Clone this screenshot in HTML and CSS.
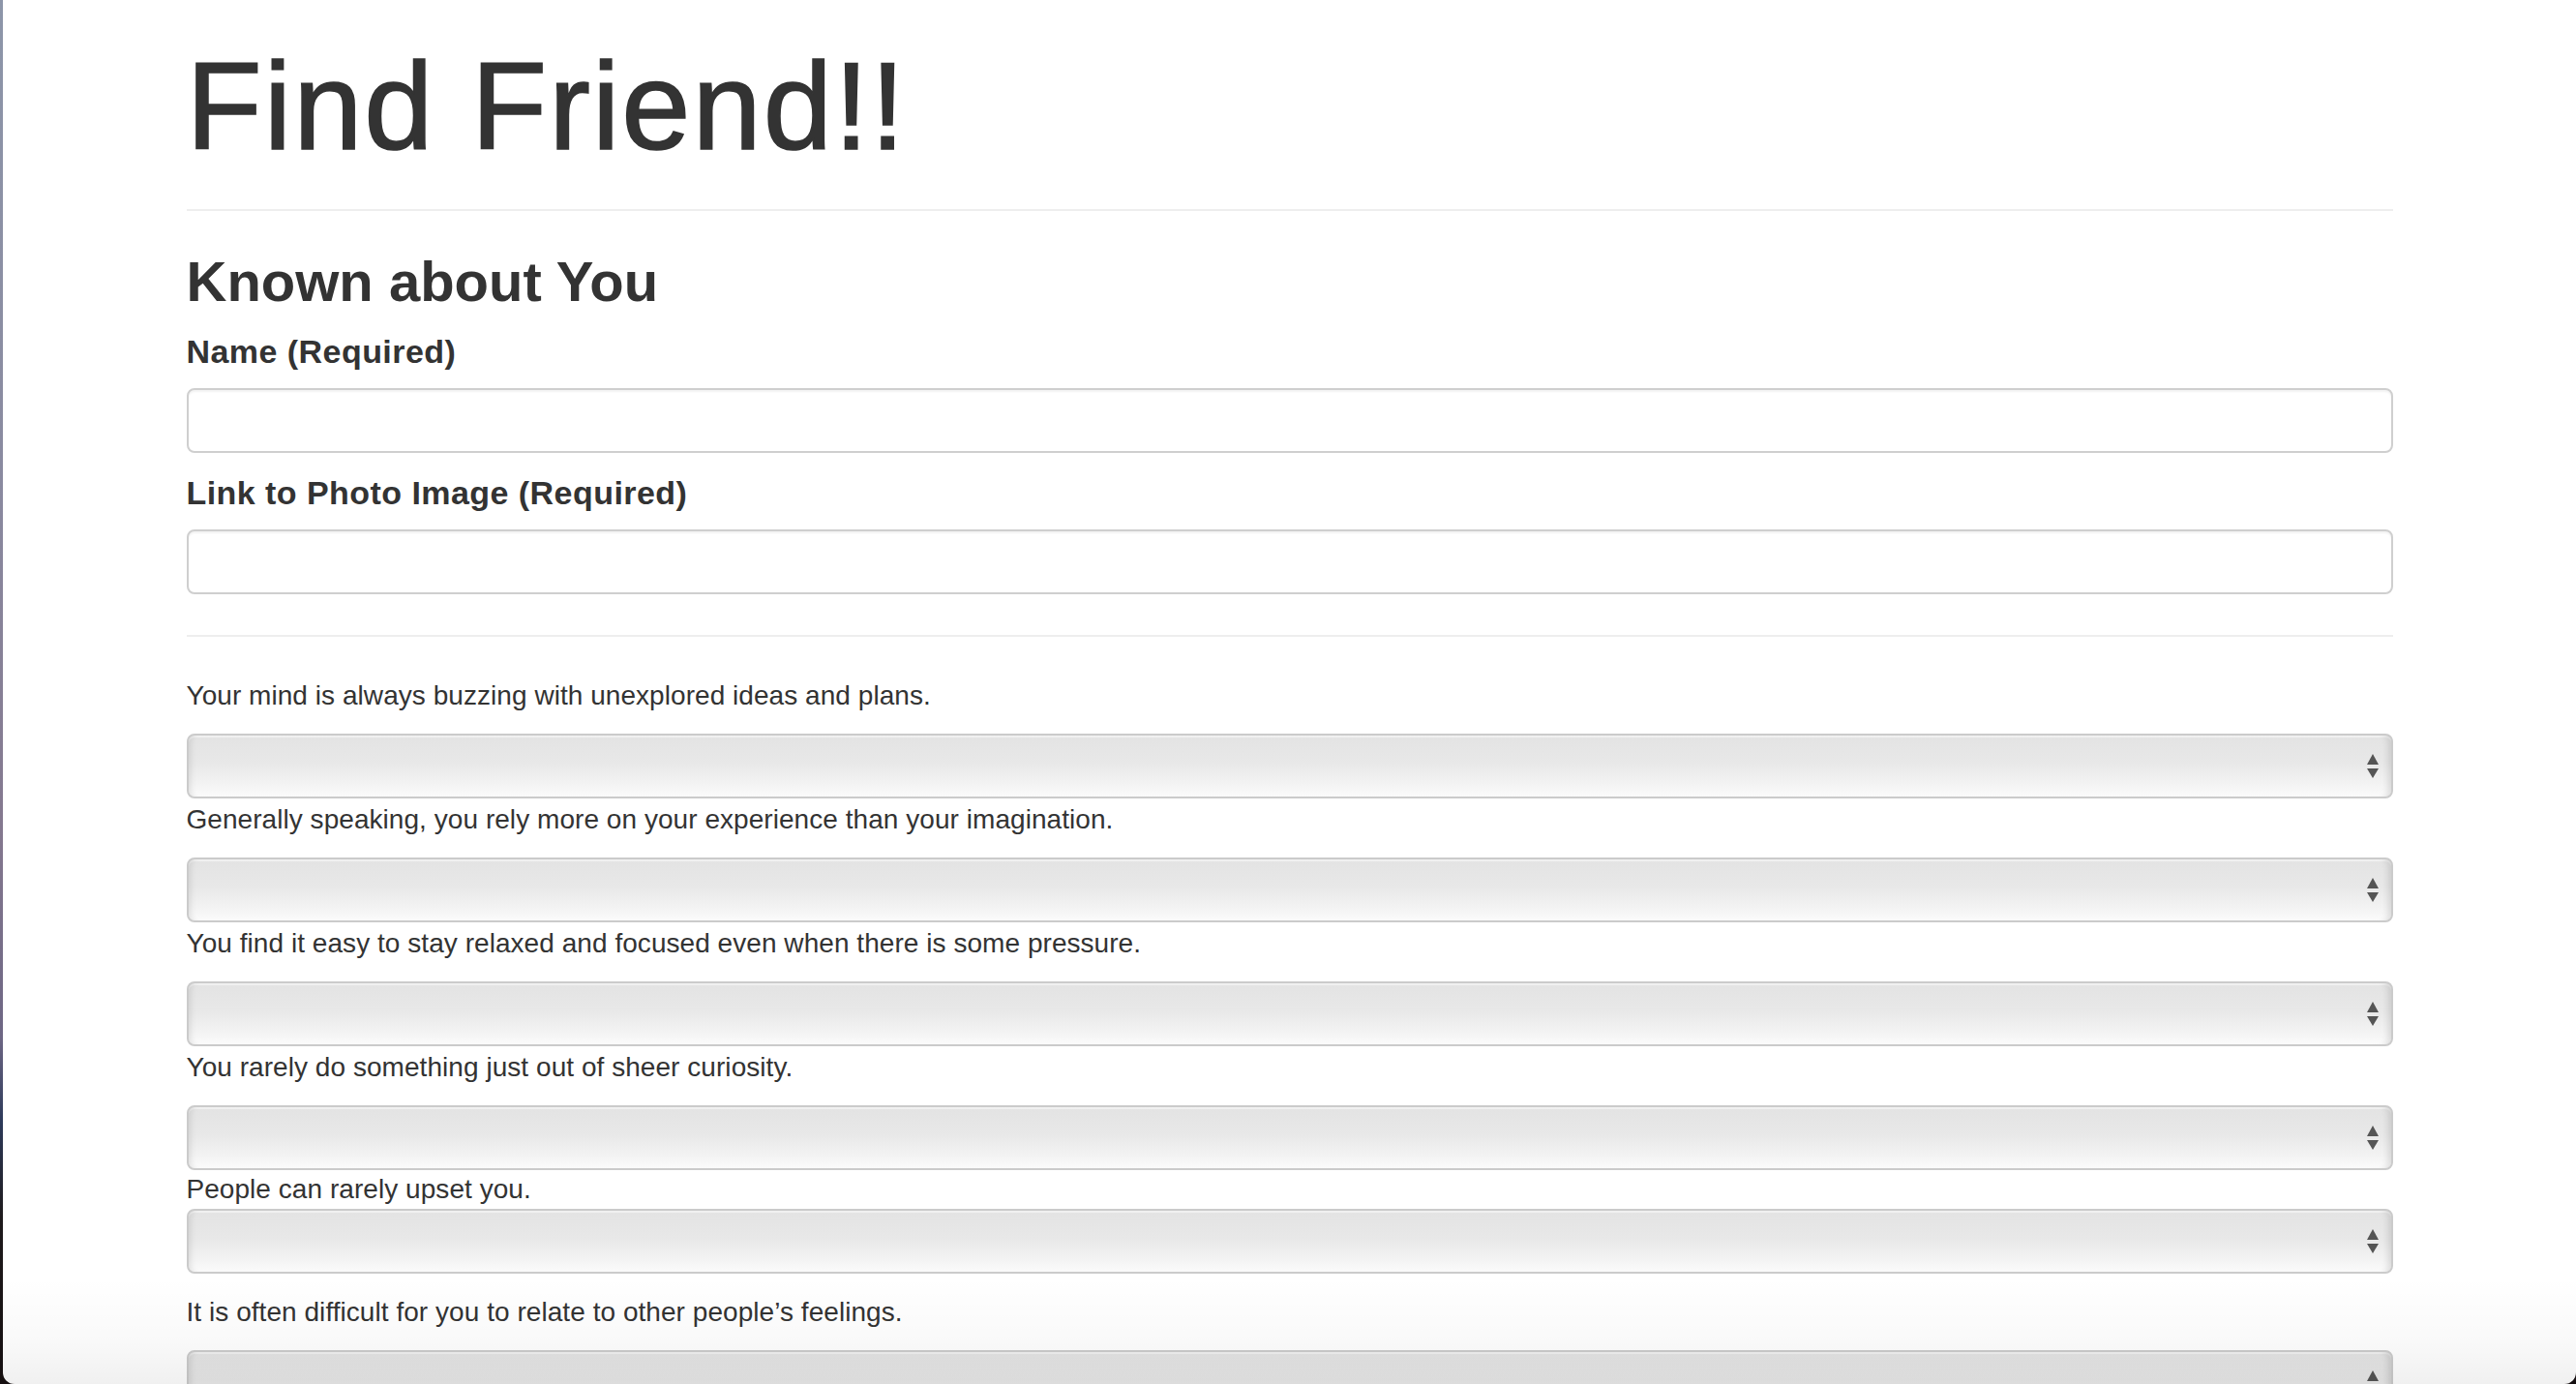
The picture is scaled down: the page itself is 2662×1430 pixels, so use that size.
FILE: index.html
```html
<!DOCTYPE html>
<html lang="en">
<head>
<meta charset="utf-8">
<title>Find Friend</title>
<link rel="stylesheet" href="styles.css">
</head>
<body>
<div class="window">
  <div class="container">
    <h1 class="title">Find Friend!!</h1>
    <hr class="rule rule-top">
    <h3 class="section-title">Known about You</h3>
    <div class="field field-first">
      <label class="field-label">Name (Required)</label>
      <input class="text-input" type="text">
    </div>
    <div class="field">
      <label class="field-label">Link to Photo Image (Required)</label>
      <input class="text-input" type="text">
    </div>
    <hr class="rule rule-mid">
    <div class="question question-first">
      <p class="q-text">Your mind is always buzzing with unexplored ideas and plans.</p>
      <div class="select-wrap"><select class="q-select"></select><span class="arrows"></span></div>
    </div>
    <div class="question">
      <p class="q-text">Generally speaking, you rely more on your experience than your imagination.</p>
      <div class="select-wrap"><select class="q-select"></select><span class="arrows"></span></div>
    </div>
    <div class="question">
      <p class="q-text">You find it easy to stay relaxed and focused even when there is some pressure.</p>
      <div class="select-wrap"><select class="q-select"></select><span class="arrows"></span></div>
    </div>
    <div class="question">
      <p class="q-text">You rarely do something just out of sheer curiosity.</p>
      <div class="select-wrap"><select class="q-select"></select><span class="arrows"></span></div>
    </div>
    <div class="question question-tight">
      <p class="q-text">People can rarely upset you.</p>
      <div class="select-wrap"><select class="q-select"></select><span class="arrows"></span></div>
    </div>
    <div class="question question-spaced">
      <p class="q-text">It is often difficult for you to relate to other people’s feelings.</p>
      <div class="select-wrap"><select class="q-select"></select><span class="arrows"></span></div>
    </div>
  </div>
  <div class="bottom-shade"></div>
</div>
</body>
</html>
```

FILE: styles.css
```css
html, body {
  margin: 0;
  padding: 0;
  height: 1430px;
  overflow: hidden;
}

body {
  background: linear-gradient(to bottom, #8d96a9 0%, #8a8aa0 35%, #84788f 60%, #6d6684 75%, #2d3a5a 81%, #1e1a1c 88%, #150f10 100%);
  font-family: "Liberation Sans", Helvetica, Arial, sans-serif;
  color: #333;
}

.window {
  position: relative;
  margin-left: 3px;
  height: 1430px;
  background: #fff;
  border-radius: 0 0 12px 12px;
  overflow: hidden;
}

.container {
  width: 2280px;
  margin: 0 auto;
}

.title {
  margin: 0;
  padding-top: 39px;
  font-size: 128px;
  line-height: 141px;
  font-weight: 500;
  letter-spacing: 2px;
  -webkit-text-stroke: 1.6px #333;
}

.rule {
  height: 0;
  border: 0;
  border-top: 2px solid #eee;
  margin: 0;
}

.rule-top {
  margin-top: 36px;
}

.section-title {
  margin: 41px 0 0;
  font-size: 58px;
  line-height: 64px;
  font-weight: bold;
}

.field {
  margin-top: 17px;
}

.field-first {
  margin-top: 16px;
}

.field-label {
  display: block;
  font-size: 34px;
  line-height: 48px;
  font-weight: bold;
  letter-spacing: 0.45px;
  margin-bottom: 14px;
}

.text-input {
  display: block;
  box-sizing: border-box;
  width: 100%;
  height: 67px;
  margin: 0;
  border: 2px solid #cfcfcf;
  border-radius: 8px;
  background: #fff;
  box-shadow: inset 0 2px 2px rgba(0, 0, 0, 0.05);
  font: inherit;
}

.rule-mid {
  margin-top: 42px;
}

.question {
  margin-top: 2px;
}

.question-first {
  margin-top: 41px;
}

.question-tight {
  margin-top: 0;
}

.question-tight .q-text {
  margin-bottom: 0;
}

.question-spaced {
  margin-top: 20px;
}

.q-text {
  margin: 0 0 19px;
  font-size: 28px;
  line-height: 40px;
  letter-spacing: 0.05px;
}

.select-wrap {
  position: relative;
  height: 67px;
}

.q-select {
  -webkit-appearance: none;
  appearance: none;
  display: block;
  box-sizing: border-box;
  width: 100%;
  height: 67px;
  margin: 0;
  border: 2px solid #cbcbcb;
  border-radius: 8px;
  background: linear-gradient(to bottom, #e3e3e3 0%, #e8e8e8 45%, #f3f3f3 80%, #fbfbfb 100%);
  box-shadow: inset 7px 0 6px -5px rgba(0, 0, 0, 0.10), inset -9px 0 7px -6px rgba(0, 0, 0, 0.12), inset 0 2px 1px rgba(255, 255, 255, 0.5);
}

.arrows {
  position: absolute;
  right: 15px;
  top: 21px;
  width: 12px;
  height: 25px;
  pointer-events: none;
}

.arrows::before,
.arrows::after {
  content: "";
  position: absolute;
  left: 0;
  width: 0;
  height: 0;
  border-left: 6px solid transparent;
  border-right: 6px solid transparent;
}

.arrows::before {
  top: 0;
  border-bottom: 11px solid #555;
}

.arrows::after {
  top: 15px;
  border-top: 10px solid #555;
}

.bottom-shade {
  position: absolute;
  left: 0;
  right: 0;
  bottom: 0;
  height: 110px;
  background: linear-gradient(to bottom, rgba(0, 0, 0, 0) 0%, rgba(0, 0, 0, 0.025) 60%, rgba(0, 0, 0, 0.06) 100%);
  pointer-events: none;
}
```
